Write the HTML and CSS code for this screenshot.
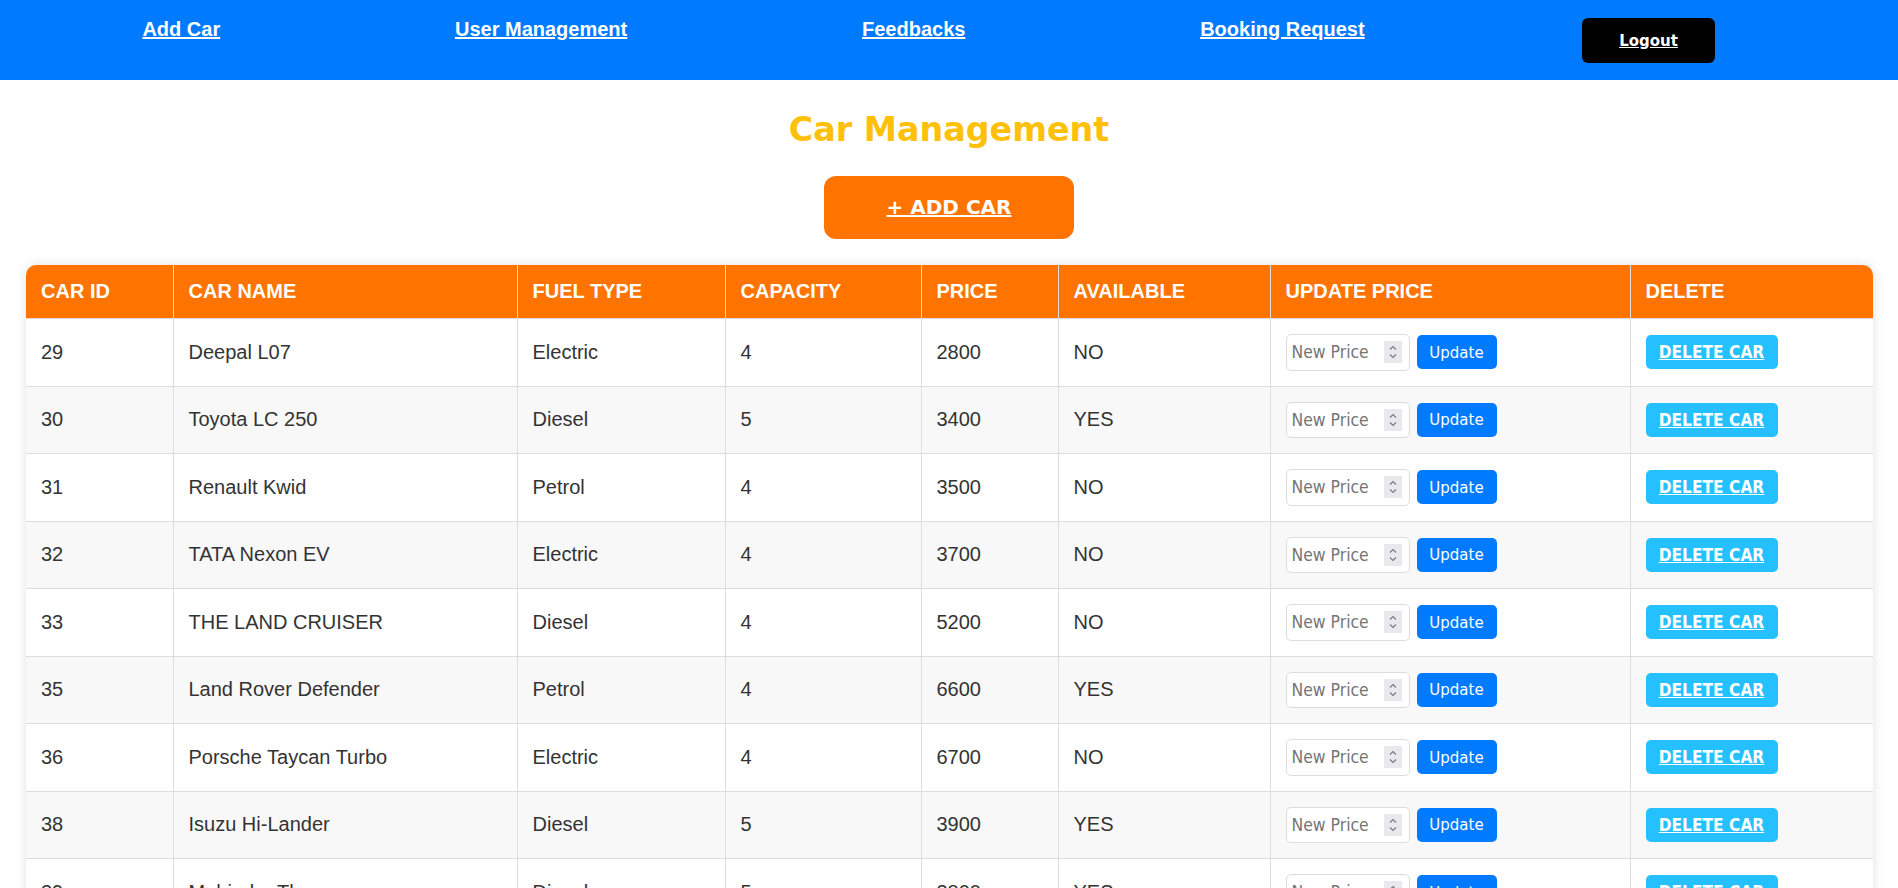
FILE: index.html
```html
<!DOCTYPE html>
<html lang="en">
<head>
<meta charset="utf-8">
<title>Car Management</title>
<link rel="stylesheet" href="styles.css">
</head>
<body>
<header class="topbar">
  <nav class="nav">
    <a class="nav-link" href="#">Add Car</a>
    <a class="nav-link" href="#">User Management</a>
    <a class="nav-link" href="#">Feedbacks</a>
    <a class="nav-link" href="#">Booking Request</a>
  </nav>
  <button class="logout-btn"><a href="#">Logout</a></button>
</header>
<main class="page">
  <h1 class="title">Car Management</h1>
  <a class="add-btn" href="#">+ ADD CAR</a>
  <div class="table-card">
    <table class="cars">
      <colgroup>
        <col class="c-id"><col class="c-name"><col class="c-fuel"><col class="c-cap"><col class="c-price"><col class="c-avail"><col class="c-upd"><col class="c-del">
      </colgroup>
      <thead>
        <tr><th>CAR ID</th><th>CAR NAME</th><th>FUEL TYPE</th><th>CAPACITY</th><th>PRICE</th><th>AVAILABLE</th><th>UPDATE PRICE</th><th>DELETE</th></tr>
      </thead>
      <tbody>
        <tr><td>29</td><td>Deepal L07</td><td>Electric</td><td>4</td><td>2800</td><td>NO</td><td><div class="upd"><span class="num"><input type="number" placeholder="New Price"><span class="spin"><svg viewBox="0 0 18 22" width="18" height="22"><path d="M6 8.5 L9 5.5 L12 8.5 M6 13.5 L9 16.5 L12 13.5"/></svg></span></span><button class="upd-btn">Update</button></div></td><td><a class="del-btn" href="#">DELETE CAR</a></td></tr>
        <tr><td>30</td><td>Toyota LC 250</td><td>Diesel</td><td>5</td><td>3400</td><td>YES</td><td><div class="upd"><span class="num"><input type="number" placeholder="New Price"><span class="spin"><svg viewBox="0 0 18 22" width="18" height="22"><path d="M6 8.5 L9 5.5 L12 8.5 M6 13.5 L9 16.5 L12 13.5"/></svg></span></span><button class="upd-btn">Update</button></div></td><td><a class="del-btn" href="#">DELETE CAR</a></td></tr>
        <tr><td>31</td><td>Renault Kwid</td><td>Petrol</td><td>4</td><td>3500</td><td>NO</td><td><div class="upd"><span class="num"><input type="number" placeholder="New Price"><span class="spin"><svg viewBox="0 0 18 22" width="18" height="22"><path d="M6 8.5 L9 5.5 L12 8.5 M6 13.5 L9 16.5 L12 13.5"/></svg></span></span><button class="upd-btn">Update</button></div></td><td><a class="del-btn" href="#">DELETE CAR</a></td></tr>
        <tr><td>32</td><td>TATA Nexon EV</td><td>Electric</td><td>4</td><td>3700</td><td>NO</td><td><div class="upd"><span class="num"><input type="number" placeholder="New Price"><span class="spin"><svg viewBox="0 0 18 22" width="18" height="22"><path d="M6 8.5 L9 5.5 L12 8.5 M6 13.5 L9 16.5 L12 13.5"/></svg></span></span><button class="upd-btn">Update</button></div></td><td><a class="del-btn" href="#">DELETE CAR</a></td></tr>
        <tr><td>33</td><td>THE LAND CRUISER</td><td>Diesel</td><td>4</td><td>5200</td><td>NO</td><td><div class="upd"><span class="num"><input type="number" placeholder="New Price"><span class="spin"><svg viewBox="0 0 18 22" width="18" height="22"><path d="M6 8.5 L9 5.5 L12 8.5 M6 13.5 L9 16.5 L12 13.5"/></svg></span></span><button class="upd-btn">Update</button></div></td><td><a class="del-btn" href="#">DELETE CAR</a></td></tr>
        <tr><td>35</td><td>Land Rover Defender</td><td>Petrol</td><td>4</td><td>6600</td><td>YES</td><td><div class="upd"><span class="num"><input type="number" placeholder="New Price"><span class="spin"><svg viewBox="0 0 18 22" width="18" height="22"><path d="M6 8.5 L9 5.5 L12 8.5 M6 13.5 L9 16.5 L12 13.5"/></svg></span></span><button class="upd-btn">Update</button></div></td><td><a class="del-btn" href="#">DELETE CAR</a></td></tr>
        <tr><td>36</td><td>Porsche Taycan Turbo</td><td>Electric</td><td>4</td><td>6700</td><td>NO</td><td><div class="upd"><span class="num"><input type="number" placeholder="New Price"><span class="spin"><svg viewBox="0 0 18 22" width="18" height="22"><path d="M6 8.5 L9 5.5 L12 8.5 M6 13.5 L9 16.5 L12 13.5"/></svg></span></span><button class="upd-btn">Update</button></div></td><td><a class="del-btn" href="#">DELETE CAR</a></td></tr>
        <tr><td>38</td><td>Isuzu Hi-Lander</td><td>Diesel</td><td>5</td><td>3900</td><td>YES</td><td><div class="upd"><span class="num"><input type="number" placeholder="New Price"><span class="spin"><svg viewBox="0 0 18 22" width="18" height="22"><path d="M6 8.5 L9 5.5 L12 8.5 M6 13.5 L9 16.5 L12 13.5"/></svg></span></span><button class="upd-btn">Update</button></div></td><td><a class="del-btn" href="#">DELETE CAR</a></td></tr>
        <tr><td>39</td><td>Mahindra Thar</td><td>Diesel</td><td>5</td><td>3800</td><td>YES</td><td><div class="upd"><span class="num"><input type="number" placeholder="New Price"><span class="spin"><svg viewBox="0 0 18 22" width="18" height="22"><path d="M6 8.5 L9 5.5 L12 8.5 M6 13.5 L9 16.5 L12 13.5"/></svg></span></span><button class="upd-btn">Update</button></div></td><td><a class="del-btn" href="#">DELETE CAR</a></td></tr>
      </tbody>
    </table>
  </div>
</main>
</body>
</html>
```

FILE: styles.css
```css
html, body {
  margin: 0;
  padding: 0;
  background: #ffffff;
  font-family: "Liberation Sans", Arial, sans-serif;
}

.topbar {
  background: #007bff;
  display: flex;
  align-items: flex-start;
  padding: 18px 0 17px 25px;
  height: 45px;
}

.nav {
  flex: 1;
  display: flex;
  justify-content: space-around;
  align-items: flex-start;
}

.nav-link {
  color: #ffffff;
  font-weight: bold;
  font-size: 20px;
  line-height: 23px;
  text-decoration: underline;
}

.logout-btn {
  margin: 0 183px 0 100px;
  width: 133px;
  height: 45px;
  background: #000000;
  border: none;
  border-radius: 6px;
  padding: 0;
  cursor: pointer;
}

.logout-btn a {
  color: #ffffff;
  font-family: "DejaVu Sans Condensed", "DejaVu Sans", sans-serif;
  font-weight: bold;
  font-size: 16.67px;
  text-decoration: underline;
}

.page {
  display: flex;
  flex-direction: column;
  align-items: center;
}

.title {
  margin: 30px 0 0 0;
  color: #ffc107;
  font-family: "DejaVu Sans", Verdana, sans-serif;
  font-weight: bold;
  font-size: 33.33px;
}

.add-btn {
  margin-top: 27px;
  width: 250px;
  padding: 20px 0;
  box-sizing: border-box;
  height: 63px;
  background: #ff7300;
  border-radius: 12px;
  color: #ffffff;
  text-align: center;
  font-family: "DejaVu Sans", Verdana, sans-serif;
  font-weight: bold;
  font-size: 20px;
  line-height: 23px;
  text-decoration: underline;
}

.table-card {
  align-self: stretch;
  margin: 26px 25px 20px 26px;
  background: #ffffff;
  border-radius: 10px;
  overflow: hidden;
  box-shadow: 0 0 12px rgba(0, 0, 0, 0.12);
}

.cars {
  width: 100%;
  border-collapse: collapse;
  table-layout: fixed;
}

.c-id { width: 147px; }
.c-name { width: 344px; }
.c-fuel { width: 208px; }
.c-cap { width: 196px; }
.c-price { width: 137px; }
.c-avail { width: 212px; }
.c-upd { width: 360px; }
.c-del { width: 243px; }

.cars th,
.cars td {
  border: 1px solid #dddddd;
  padding: 15px;
  text-align: left;
  font-size: 20px;
  line-height: 23px;
}

.cars thead tr th {
  border-top: none;
}

.cars th:first-child,
.cars td:first-child {
  border-left: none;
}

.cars th:last-child,
.cars td:last-child {
  border-right: none;
}

.cars th {
  background: #ff7300;
  color: #ffffff;
  font-weight: bold;
}

.cars td {
  color: #333333;
}

.cars tbody tr:nth-child(even) {
  background: #f8f8f8;
}

.upd {
  display: flex;
  align-items: center;
  gap: 7px;
}

.num {
  position: relative;
  display: inline-flex;
}

.upd input {
  width: 124px;
  height: 36.5px;
  box-sizing: border-box;
  padding: 0 30px 0 5px;
  border: 1px solid #dddddd;
  border-radius: 5px;
  font-family: "DejaVu Sans Condensed", "DejaVu Sans", sans-serif;
  font-size: 17.4px;
  color: #333333;
  background: #ffffff;
  -moz-appearance: textfield;
}

.upd input::placeholder {
  color: #757575;
}

.upd input::-webkit-inner-spin-button,
.upd input::-webkit-outer-spin-button {
  -webkit-appearance: none;
  margin: 0;
}

.spin {
  position: absolute;
  right: 8px;
  top: 7px;
  width: 18px;
  height: 22px;
  background: #e9e9ed;
  pointer-events: none;
}

.spin svg {
  display: block;
}

.spin path {
  fill: none;
  stroke: #7a7a80;
  stroke-width: 1.2;
}

.upd-btn {
  width: 80px;
  height: 34px;
  padding: 0;
  background: #007bff;
  color: #ffffff;
  border: none;
  border-radius: 5px;
  font-family: "DejaVu Sans Condensed", "DejaVu Sans", sans-serif;
  font-size: 16.67px;
}

.del-btn {
  display: inline-block;
  vertical-align: middle;
  width: 132px;
  height: 34px;
  line-height: 34px;
  background: #24c0ff;
  color: #ffffff;
  border-radius: 5px;
  text-align: center;
  font-family: "DejaVu Sans Condensed", "DejaVu Sans", sans-serif;
  font-weight: bold;
  font-size: 17.2px;
  text-decoration: underline;
}
```
